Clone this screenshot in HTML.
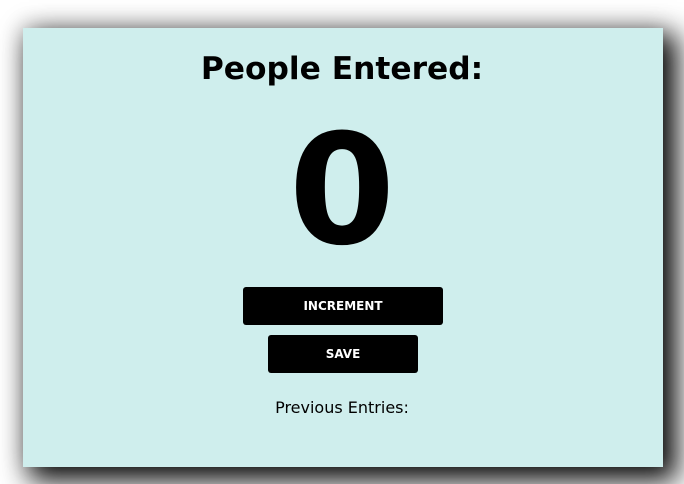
<!DOCTYPE html>
<html><head><style>
html,body{margin:0;padding:0;background:#fff;width:684px;height:484px;overflow:hidden;font-family:"DejaVu Sans","Liberation Sans",sans-serif;}
.card{position:absolute;left:23px;top:28px;width:640px;height:439px;background:#cfeeed;box-shadow:10px 10px 26px 4px rgba(0,0,0,0.95),-2px -4px 20px rgba(0,0,0,0.12);}
.t{position:absolute;left:0;width:684px;text-align:center;white-space:nowrap;}
.btn{position:absolute;background:#000;color:#fff;border-radius:3px;font-weight:bold;font-size:12px;text-align:center;line-height:38px;height:38px;}
</style></head><body>
<div class="card"></div>
<div class="t" style="top:54px;font-size:31.3px;line-height:31px;font-weight:bold;">People Entered:</div>
<div class="t" style="top:114px;font-size:153px;line-height:155px;font-weight:bold;">0</div>
<div class="btn" style="left:243px;top:287px;width:200px;">INCREMENT</div>
<div class="btn" style="left:268px;top:335px;width:150px;">SAVE</div>
<div class="t" style="top:400px;font-size:16px;line-height:16px;">Previous Entries:</div>
</body></html>
